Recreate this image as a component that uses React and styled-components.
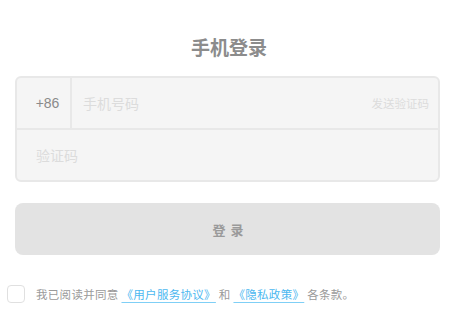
import React, { useState } from 'react'
import styled, { createGlobalStyle } from 'styled-components'

const GlobalStyle = createGlobalStyle`
    html, body {
        margin: 0;
        padding: 0;
        background: #fff;
    }
    body {
        font-family: "Noto Sans CJK SC", "Liberation Sans", sans-serif;
    }
`

function App() {
    const [agreed, setAgreed] = useState(false)
    const [phone, setPhone] = useState('')
    const [code, setCode] = useState('')

  return (
    <Page>
        <GlobalStyle />
        <Title>手机登录</Title>
        <InputGroup>
            <Row>
                <Prefix>+86</Prefix>
                <Field
                    placeholder='手机号码'
                    value={phone}
                    onChange={e => setPhone(e.target.value)}
                />
                <SendCode>发送验证码</SendCode>
            </Row>
            <Row last>
                <Field
                    first
                    placeholder='验证码'
                    value={code}
                    onChange={e => setCode(e.target.value)}
                />
            </Row>
        </InputGroup>
        <LoginButton>登 录</LoginButton>
        <Agreement>
            <CheckBox checked={agreed} onClick={() => setAgreed(!agreed)} />
            <AgreeText>
                我已阅读并同意 <Link href='#'>《用户服务协议》</Link> 和 <Link href='#'>《隐私政策》</Link> 各条款。
            </AgreeText>
        </Agreement>
    </Page>
  )
}

export default App

const Page = styled.div`
    display: flex;
    flex-direction: column;
    padding: 0 12px 0 15px;
`

const Title = styled.h1`
    margin: 37px 0 19px;
    font-size: 19px;
    line-height: 20px;
    font-weight: 700;
    color: #8c8c8c;
    text-align: center;
    padding-left: 3px;
`

const InputGroup = styled.div`
    border: 2px solid #e8e8e8;
    border-radius: 6px;
    background-color: #f5f5f5;
    overflow: hidden;
`

const Row = styled.div`
    display: flex;
    align-items: center;
    height: 50px;
    border-bottom: ${props => props.last ? 'none' : '2px solid #e8e8e8'};
`

const Prefix = styled.div`
    width: 55px;
    height: 100%;
    display: flex;
    align-items: center;
    justify-content: center;
    border-right: 2px solid #e8e8e8;
    font-family: "Liberation Sans", sans-serif;
    font-size: 14px;
    color: #8a8a8a;
    box-sizing: border-box;
    padding-left: 8px;
`

const Field = styled.input`
    flex: 1;
    min-width: 0;
    height: 100%;
    border: none;
    outline: none;
    background: transparent;
    padding: 0 0 0 ${props => props.first ? '19px' : '11px'};
    font-family: "Noto Sans CJK SC", sans-serif;
    font-size: 14px;
    color: #555;

    &::placeholder {
        color: #dcdcdc;
    }
`

const SendCode = styled.span`
    font-size: 11.5px;
    color: #dcdcdc;
    padding-right: 9px;
    white-space: nowrap;
    cursor: pointer;
`

const LoginButton = styled.button`
    margin-top: 21px;
    height: 52px;
    border: none;
    border-radius: 8px;
    background-color: #e3e3e3;
    font-family: "Noto Sans CJK SC", sans-serif;
    font-size: 13px;
    font-weight: 700;
    color: #9a9a9a;
    letter-spacing: 1px;
    padding-left: 8px;
    cursor: pointer;
`

const Agreement = styled.div`
    display: flex;
    align-items: center;
    margin: 30px 0 0 -8px;
`

const CheckBox = styled.div`
    width: 18px;
    height: 18px;
    box-sizing: border-box;
    border: 1.5px solid #e0e0e0;
    border-radius: 4px;
    background-color: ${props => props.checked ? '#4db8f0' : '#fff'};
    flex-shrink: 0;
    cursor: pointer;
`

const AgreeText = styled.div`
    margin-left: 11px;
    font-size: 11.5px;
    letter-spacing: 0.3px;
    color: #9a9a9a;
    white-space: nowrap;
`

const Link = styled.a`
    color: #4db8f0;
    text-decoration: underline;
    text-decoration-color: #7fcff6;
    text-decoration-thickness: 1.5px;
    text-underline-offset: 3px;
`
